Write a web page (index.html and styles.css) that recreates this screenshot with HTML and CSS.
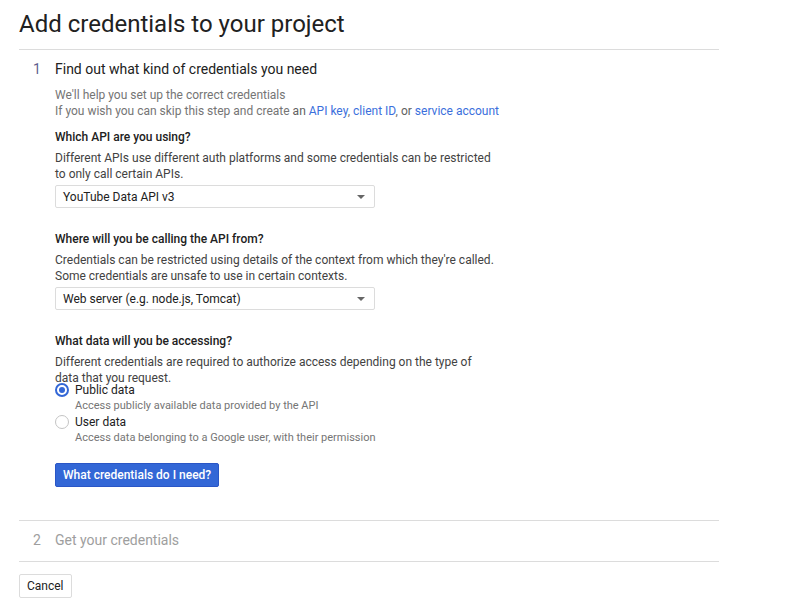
FILE: index.html
```html
<!DOCTYPE html>
<html>
<head>
<meta charset="utf-8">
<link rel="stylesheet" href="styles.css">
</head>
<body>
<div class="page">
  <h1 class="title">Add credentials to your project</h1>
  <section class="step step-active">
    <div class="step-head">
      <span class="step-num">1</span>
      <span class="step-title">Find out what kind of credentials you need</span>
    </div>
    <div class="step-body">
      <p class="intro">We'll help you set up the correct credentials<br>If you wish you can skip this step and create <span class="dark">an</span> <a class="link">API key</a>, <a class="link">client ID</a>, <span class="dark">or</span> <a class="link">service account</a></p>

      <div class="field">
        <div class="label">Which API are you using?</div>
        <p class="desc">Different APIs use different auth platforms and some credentials can be restricted<br>to only call certain APIs.</p>
        <div class="select"><span>YouTube Data API v3</span><span class="caret"></span></div>
      </div>

      <div class="field">
        <div class="label">Where will you be calling the API from?</div>
        <p class="desc">Credentials can be restricted using details of the context from which they're called.<br>Some credentials are unsafe to use in certain contexts.</p>
        <div class="select"><span>Web server (e.g. node.js, Tomcat)</span><span class="caret"></span></div>
      </div>

      <div class="field">
        <div class="label">What data will you be accessing?</div>
        <p class="desc desc-tight">Different credentials are required to authorize access depending on the type of<br>data that you request.</p>
        <div class="radio-row">
          <span class="radio radio-on"></span>
          <div>
            <div class="radio-label">Public data</div>
            <div class="radio-sub">Access publicly available data provided by the API</div>
          </div>
        </div>
        <div class="radio-row">
          <span class="radio"></span>
          <div>
            <div class="radio-label">User data</div>
            <div class="radio-sub">Access data belonging to a Google user, with their permission</div>
          </div>
        </div>
      </div>

      <button class="btn-primary">What credentials do I need?</button>
    </div>
  </section>
  <section class="step step-inactive">
    <div class="step-head">
      <span class="step-num">2</span>
      <span class="step-title">Get your credentials</span>
    </div>
  </section>
  <button class="btn-cancel">Cancel</button>
</div>
</body>
</html>
```
FILE: styles.css
```css
* { box-sizing: border-box; }
body {
  margin: 0;
  font-family: Roboto, "Liberation Sans", Arial, sans-serif;
  color: #212121;
  background: #fff;
}
.page {
  width: 700px;
  margin-left: 19px;
  padding-top: 10px;
}
.title {
  margin: 0;
  font-size: 24px;
  font-weight: 400;
  line-height: 28px;
  color: #212121;
  padding-bottom: 11px;
  border-bottom: 1px solid #dcdcdc;
}
.step { border-bottom: 1px solid #dcdcdc; }
.step-head {
  display: flex;
  align-items: baseline;
  padding-left: 14px;
}
.step-num {
  width: 22px;
  font-size: 14px;
  color: #5f5f8f;
}
.step-title { font-size: 14px; }
.step-active .step-head { padding-top: 11px; height: 30px; }
.step-active .step-title { font-size: 14px; color: #212121; }
.step-inactive .step-head { padding-top: 11px; height: 40px; }
.step-inactive .step-num, .step-inactive .step-title { color: #9e9e9e; }
.step-body {
  padding-left: 36px;
  padding-bottom: 33px;
}
.intro {
  margin: 7px 0 0;
  font-size: 12px;
  line-height: 16px;
  color: #757575;
}
.dark { color: #616161; }
.link { color: #3b6fdc; text-decoration: none; }
.field { margin-top: 10px; }
.field + .field { margin-top: 23px; }
.label {
  font-size: 12px;
  font-weight: 500;
  line-height: 16px;
  color: #212121;
}
.desc {
  margin: 5px 0 3px;
  font-size: 12px;
  line-height: 16px;
  color: #424242;
}
.desc-tight { margin-bottom: 0; }
.select {
  width: 320px;
  height: 23px;
  border: 1px solid #dcdcdc;
  border-radius: 2px;
  display: flex;
  align-items: center;
  justify-content: space-between;
  padding: 0 8px 0 7px;
  font-size: 12px;
  color: #212121;
}
.caret {
  width: 0;
  height: 0;
  border-left: 4px solid transparent;
  border-right: 4px solid transparent;
  border-top: 4px solid #666;
  margin-right: 1px;
}
.radio-row {
  display: flex;
  align-items: flex-start;
  gap: 6px;
}
.desc-tight + .radio-row { margin-top: -4px; }
.radio {
  width: 14px;
  height: 14px;
  border-radius: 50%;
  border: 1px solid #c4c4c4;
  margin-top: 1px;
  flex: none;
  position: relative;
}
.radio-on { border: 2px solid #3367d6; }
.radio-on::after {
  content: "";
  position: absolute;
  left: 2px;
  top: 2px;
  width: 6px;
  height: 6px;
  border-radius: 50%;
  background: #3367d6;
}
.radio-label {
  font-size: 12px;
  line-height: 16px;
  color: #212121;
}
.radio-sub {
  font-size: 11px;
  line-height: 16px;
  color: #757575;
}
.btn-primary {
  margin-top: 17px;
  height: 24px;
  padding: 0 7px;
  background: #3367d6;
  border: 1px solid #2a56c6;
  border-radius: 2px;
  color: #fff;
  font-family: inherit;
  font-size: 12px;
  font-weight: 500;
  display: block;
}
.btn-cancel {
  margin-top: 12px;
  height: 24px;
  padding: 0 7px;
  background: #fff;
  border: 1px solid #dcdcdc;
  border-radius: 2px;
  color: #212121;
  font-family: inherit;
  font-size: 12px;
}
```
